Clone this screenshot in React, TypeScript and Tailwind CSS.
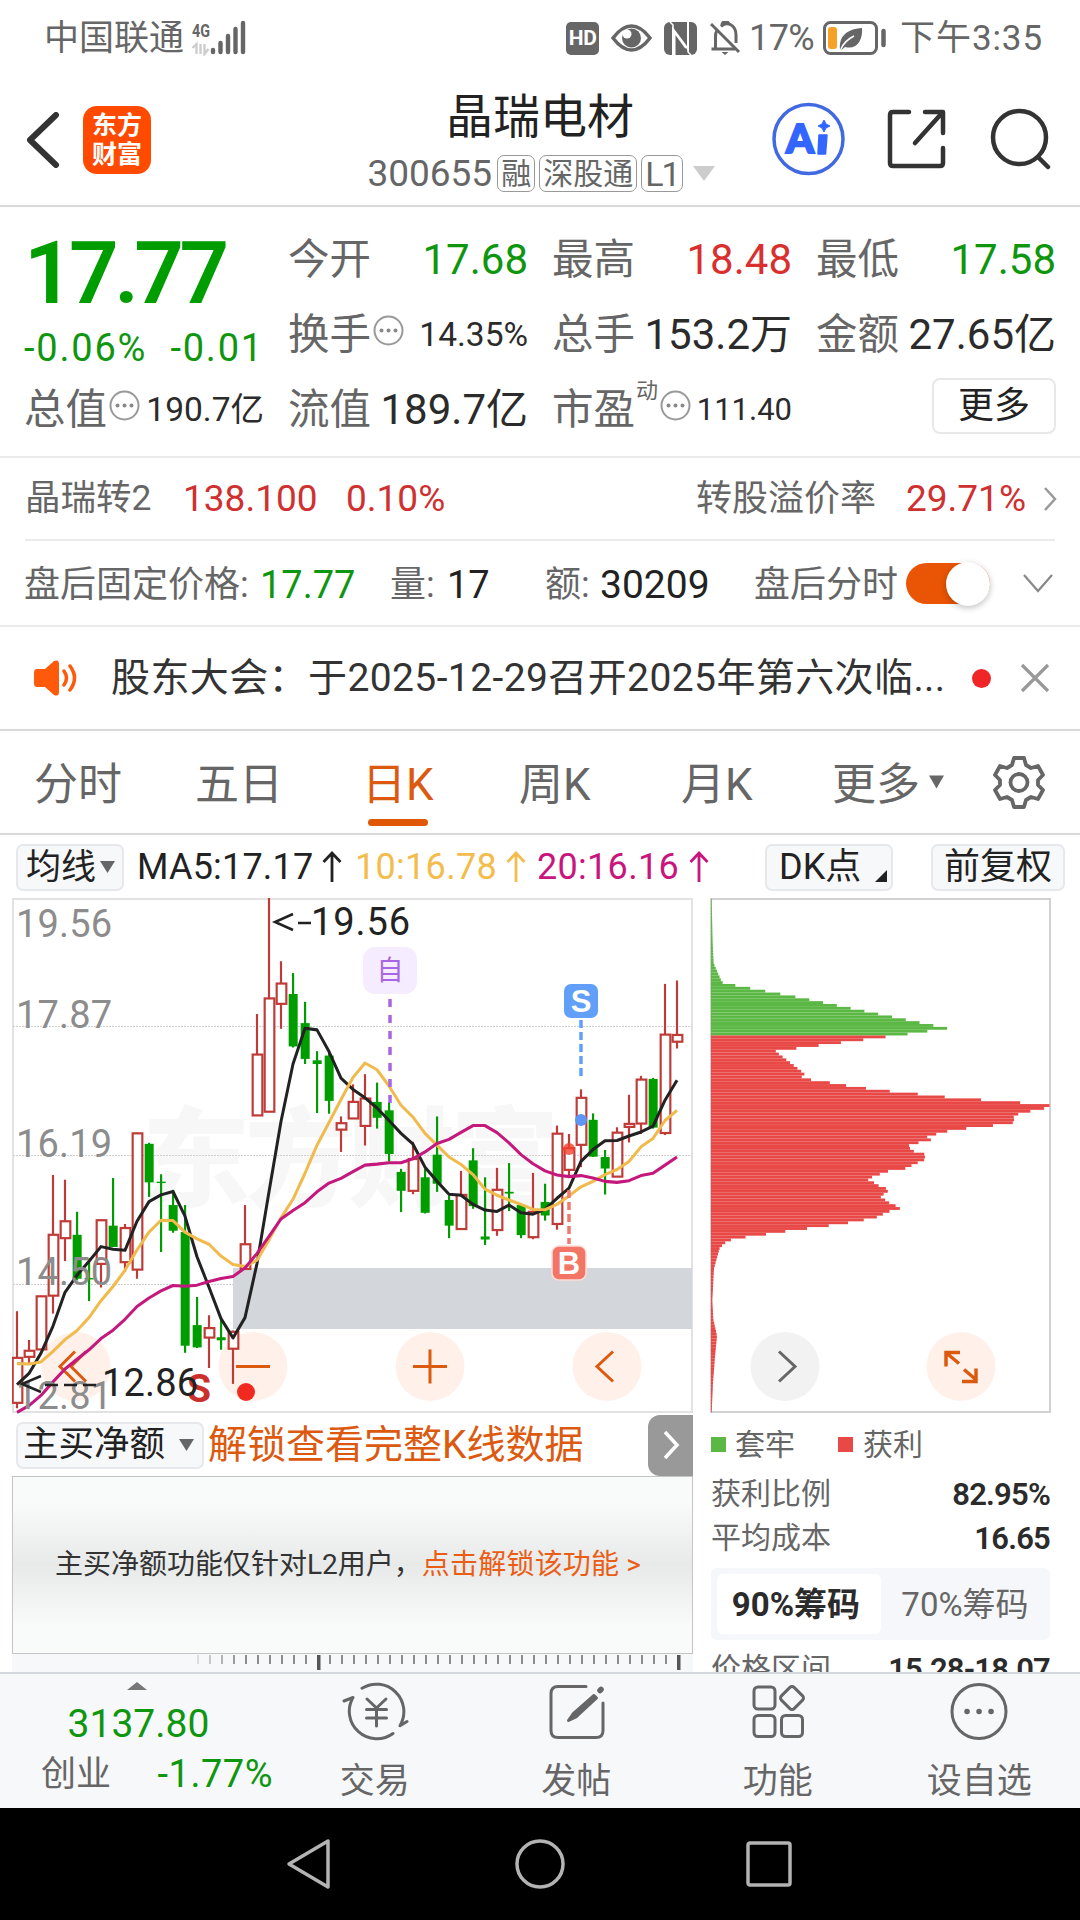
import React from "react";
import clsx from "clsx";

type Candle = [up: 0 | 1, high: number, top: number, bottom: number, low: number];

// plot units: one candle every 36, y grows downwards
const CANDLES: Candle[] = [
  [1, 1246, 1382, 1518, 1533], [1, 1331, 1361, 1382, 1402], [1, 1200, 1200, 1360, 1360], [1, 843, 1018, 1201, 1253],
  [1, 857, 978, 1031, 1098], [0, 952, 1020, 1150, 1155], [0, 1090, 1148, 1152, 1216], [1, 975, 975, 1107, 1176],
  [0, 852, 993, 1056, 1056], [1, 988, 998, 1102, 1130], [1, 718, 718, 1124, 1150], [0, 748, 751, 865, 908],
  [0, 841, 863, 867, 1071], [0, 887, 932, 1008, 1014], [0, 932, 1012, 1348, 1369], [0, 1204, 1287, 1353, 1355],
  [1, 1258, 1294, 1325, 1414], [0, 1270, 1323, 1332, 1360], [1, 1303, 1305, 1358, 1461], [1, 932, 1046, 1122, 1122],
  [1, 367, 485, 668, 668], [1, 24, 319, 657, 657], [1, 211, 275, 338, 411], [0, 246, 308, 463, 466],
  [0, 331, 394, 500, 515], [0, 477, 504, 515, 660], [0, 480, 490, 624, 662], [1, 670, 688, 710, 775],
  [1, 575, 625, 677, 677], [1, 545, 615, 699, 756], [0, 570, 627, 674, 706], [0, 628, 652, 781, 803],
  [0, 825, 834, 890, 953], [1, 745, 794, 891, 900], [0, 825, 850, 955, 957], [0, 670, 783, 869, 893],
  [0, 903, 917, 993, 1030], [1, 831, 900, 1004, 1004], [0, 764, 800, 935, 943], [0, 850, 1025, 1034, 1050],
  [1, 822, 885, 1007, 1023], [0, 808, 893, 898, 950], [0, 930, 932, 1021, 1030], [1, 837, 950, 1028, 1033],
  [0, 869, 923, 963, 978], [1, 697, 719, 989, 1005], [1, 722, 762, 829, 845], [1, 590, 613, 755, 820],
  [0, 661, 680, 789, 790], [0, 769, 790, 824, 901], [1, 702, 716, 849, 849], [1, 606, 690, 702, 747],
  [1, 550, 559, 692, 722], [0, 556, 559, 703, 706], [1, 278, 426, 720, 725], [1, 268, 427, 450, 469],
];

const MA5 = [
  1463, 1430, 1370, 1290, 1190, 1140, 1098, 1055, 1063, 1066, 980, 922, 902, 892, 965, 1085, 1175, 1268, 1325, 1265,
  1105, 893, 685, 515, 409, 414, 478, 557, 590, 615, 645, 682, 720, 752, 820, 862, 900, 903, 930, 947,
  951, 932, 955, 959, 945, 912, 882, 803, 768, 742, 741, 728, 716, 699, 622, 563,
];

const MA10 = [
  1401, 1402, 1396, 1365, 1330, 1303, 1265, 1215, 1173, 1125, 1065, 1012, 977, 978, 1012, 1032, 1048, 1083, 1108, 1114,
  1095, 1035, 970, 915, 838, 755, 688, 620, 555, 512, 532, 580, 637, 672, 720, 755, 790, 812, 842, 885,
  903, 917, 930, 945, 946, 930, 905, 878, 862, 842, 827, 803, 760, 735, 682, 652,
];

const MA20 = [
  1545, 1525, 1495, 1455, 1417, 1388, 1360, 1327, 1302, 1270, 1232, 1207, 1186, 1170, 1172, 1169, 1158, 1149, 1143, 1118,
  1075, 1025, 973, 948, 925, 893, 867, 853, 833, 814, 811, 807, 807, 795, 775, 750, 738, 717, 697, 697,
  718, 748, 783, 810, 831, 843, 848, 845, 852, 862, 865, 860, 845, 838, 814, 790,
];

// chip distribution outline: [y, right end of the bar]
const CHIPS: [number, number][] = [
  [182, 64], [300, 67], [355, 70], [405, 95], [413, 135], [421, 182], [444, 319], [527, 771], [543, 646], [580, 320],
  [588, 255], [648, 343], [656, 334], [663, 356], [670, 410], [678, 460], [686, 522], [693, 585], [700, 665], [708, 744],
  [716, 857], [723, 968], [731, 1080], [738, 1072], [746, 1029], [753, 989], [761, 972], [768, 969], [776, 981], [784, 924],
  [792, 837], [799, 778], [807, 745], [814, 706], [822, 729], [830, 690], [837, 656], [852, 662], [860, 702], [875, 706],
  [882, 689], [890, 666], [898, 657], [905, 600], [913, 574], [920, 552], [928, 529], [935, 549], [943, 558], [950, 583],
  [958, 596], [966, 585], [973, 568], [980, 580], [988, 593], [996, 605], [1003, 641], [1011, 607], [1018, 581], [1026, 573],
  [1034, 533], [1041, 494], [1049, 435], [1056, 378], [1064, 304], [1072, 246], [1079, 186], [1087, 128], [1095, 107],
  [1103, 98], [1108, 89], [1165, 71], [1250, 66], [1300, 69], [1345, 80], [1400, 74], [1470, 68], [1549, 64],
];

const cx = (i: number) => 51 + i * 36;
const toPoints = (line: number[]) => line.map((v, i) => `${cx(i)},${v}`).join(" ");

const chipEnd = (y: number) => {
  const i = CHIPS.findIndex(([py]) => py >= y);
  if (i <= 0) return CHIPS[0][1];
  const [y0, x0] = CHIPS[i - 1];
  const [y1, x1] = CHIPS[i];
  return x0 + ((x1 - x0) * (y - y0)) / (y1 - y0);
};

const StatusBar = () => (
  <div className="flex h-[75px] shrink-0 items-center pl-[44px] pr-[37px] pt-px text-[35px] leading-none text-[#666]">
    <span>中国联通</span>
    <svg className="ml-[7px]" width="56" height="36" viewBox="0 0 56 36">
      <text x="1" y="17" fontSize="19" fontWeight="700" fill="#666" textLength="18" lengthAdjust="spacingAndGlyphs">4G</text>
      <path d="M5.500 34V24L1.500 28M9.500 34V24M13.500 24v10l4-5" stroke="#ccc" strokeWidth="2.300" fill="none" />
      <g stroke="#666" strokeWidth="4.400" strokeLinecap="round">
        <path d="M22 32v-2M29.500 32V23M37 32V16M44.500 32V9M52 32V3" />
      </g>
    </svg>
    <div className="ml-auto flex items-center">
      <span className="flex h-[33px] w-[33px] items-center justify-center rounded-[5px] bg-[#666] text-[21px] font-bold tracking-[-0.5px] text-white">HD</span>
      <svg className="ml-[12px]" width="41" height="28" viewBox="0 0 41 28">
        <path d="M2 14Q11 2 20.500 2T39 14Q30 26 20.500 26T2 14z" fill="none" stroke="#666" strokeWidth="3.500" />
        <circle cx="20.500" cy="14" r="9.500" fill="#666" />
        <circle cx="16" cy="10" r="4.500" fill="#fff" />
      </svg>
      <svg className="ml-[12px]" width="33" height="33" viewBox="0 0 33 33">
        <rect width="33" height="33" rx="6" fill="#666" />
        <path d="M9 33V7l15 20V0M10.500 33V10l11.500 16" fill="none" stroke="#fff" strokeWidth="2" />
        <path d="M6 0l3 3v30M27 33l-3-3V0" fill="none" stroke="#fff" strokeWidth="1.500" />
      </svg>
      <svg className="ml-[13px]" width="31" height="34" viewBox="0 0 31 34" fill="none" stroke="#666" strokeWidth="3">
        <path d="M5.500 27V15c0-2 .5-4 1.500-5.500M11 5.500C17-.5 26 4 26 14v8M1.500 28H25" />
        <path d="M1 3l28 28" />
        <path d="M11.500 31h7l-3.500 3z" fill="#666" stroke="none" />
        <path d="M12 4a3 3 0 0 1 7 0" />
      </svg>
      <span className="ml-[8px] w-[68px] text-[36px] tracking-[-0.7px]">17%</span>
      <svg className="ml-[6px]" width="64" height="34" viewBox="0 0 64 34">
        <rect x="1.500" y="1.500" width="52" height="31" rx="6" fill="none" stroke="#666" strokeWidth="3" />
        <rect x="5" y="6" width="9" height="22" rx="3" fill="#f7a128" />
        <path d="M17 28c-1-12 6-20 22-21 1 12-5 22-17 19l-3 2.500z" fill="#666" />
        <path d="M18 28c3-7 7-10 13-13" stroke="#fff" strokeWidth="1.500" fill="none" />
        <path d="M60.500 10v14" stroke="#666" strokeWidth="4.500" strokeLinecap="round" />
      </svg>
      <span className="ml-[13px] tracking-[0.9px]">下午3:35</span>
    </div>
  </div>
);

const Tag = ({ children }: { children: React.ReactNode }) => (
  <span className="flex h-[37px] shrink-0 items-center whitespace-nowrap rounded-[7px] border border-[#999] px-[3px] text-[30px] leading-none">{children}</span>
);

const Header = () => (
  <header className="flex h-[132px] shrink-0 border-b-2 border-[#d9d9d9]">
    <div className="flex w-[360px] items-center pb-px pl-[26px]">
      <svg width="34" height="56" viewBox="0 0 34 56">
        <path d="M30 3L4 28l26 25" fill="none" stroke="#333" strokeWidth="6" strokeLinecap="round" strokeLinejoin="round" />
      </svg>
      <div className="ml-[23px] flex h-[68px] w-[68px] flex-col items-center justify-center rounded-[14px] bg-[#ff4a00] text-[25px] font-bold leading-[29px] text-white">
        <span>东方</span>
        <span>财富</span>
      </div>
    </div>
    <div className="flex w-[360px] flex-col items-center">
      <h1 className="mt-[18px] text-[47px] leading-[48px] text-[#222]">晶瑞电材</h1>
      <div className="mt-[14px] flex items-center gap-[4px] whitespace-nowrap pl-[2px] text-[#666]">
        <span className="mr-px text-[37px] leading-none">300655</span>
        <Tag>融</Tag>
        <Tag>深股通</Tag>
        <Tag><span className="text-[34px] tracking-[-2px]">L1</span></Tag>
        <svg className="ml-[6px]" width="22" height="15" viewBox="0 0 22 15"><path d="M0 0h22L11 15z" fill="#ccc" /></svg>
      </div>
    </div>
    <div className="flex flex-1 items-center pb-[2px] pl-[52px]">
      <svg width="73" height="74" viewBox="0 0 73 74">
        <circle cx="36.500" cy="37" r="34.500" fill="none" stroke="#4169e1" strokeWidth="3.500" />
        <text x="14" y="51" fontSize="40" fontWeight="900" fill="#3366ff" stroke="#3366ff" strokeWidth="2" fontFamily="Lato" textLength="28" lengthAdjust="spacingAndGlyphs">A</text>
        <path d="M47 33h8l-1.500 19H46z" fill="#3366ff" stroke="#3366ff" strokeWidth="1.500" strokeLinejoin="round" />
        <path d="M52 18l2 4 4 2-4 2-2 4-2-4-4-2 4-2z" fill="#3366ff" stroke="#3366ff" />
      </svg>
      <svg className="ml-[42px]" width="60" height="60" viewBox="0 0 60 60" fill="none" stroke="#333" strokeWidth="4.500" strokeLinecap="round" strokeLinejoin="round">
        <path d="M22 3H6Q3 3 3 6v48q0 3 3 3h47q3 0 3-3V39" />
        <path d="M38 3h18v21M55 4L28 34" />
      </svg>
      <svg className="ml-[43px]" width="62" height="62" viewBox="0 0 62 62" fill="none" stroke="#333" strokeWidth="4.500" strokeLinecap="round">
        <circle cx="29.500" cy="29.500" r="26.500" />
        <path d="M48 49l10 10" />
      </svg>
    </div>
  </header>
);

const InfoDots = () => (
  <svg className="mb-[8px] ml-[2px] shrink-0" width="31" height="31" viewBox="0 0 31 31">
    <circle cx="15.500" cy="15.500" r="14" fill="none" stroke="#999" strokeWidth="2" />
    <g fill="#888">
      <circle cx="8.500" cy="15.500" r="2" />
      <circle cx="15.500" cy="15.500" r="2" />
      <circle cx="22.500" cy="15.500" r="2" />
    </g>
  </svg>
);

interface StatProps {
  label: string;
  value: string;
  tone?: string;
  dots?: boolean;
  sup?: string;
}

const Stat = ({ label, value, tone = "text-[#2b2b2b]", dots, sup }: StatProps) => (
  <div className="flex h-[75px] items-center whitespace-nowrap">
    <span className="text-[41.5px] text-[#666]">{label}</span>
    {sup && <span className="mb-[38px] ml-px text-[22px] text-[#666]">{sup}</span>}
    {dots && <InfoDots />}
    <span className={clsx("ml-auto", sup ? "text-[31px]" : dots ? "text-[33.5px]" : "text-[42px]", tone)}>{value}</span>
  </div>
);

const Quote = () => (
  <section className="grid h-[251px] shrink-0 grid-cols-[240px_240px_240px_240px] gap-x-[24px] border-b-2 border-[#ebebeb] pl-[24px] pt-[15px] leading-none">
    <div>
      <div className="h-[101px] pt-[8px] text-[87px] font-semibold tracking-[-4.6px] text-[#009d00]">17.77</div>
      <div className="flex h-[49px] items-center justify-between text-[38px] text-[#0f960f]">
        <span className="tracking-[1.8px]">-0.06%</span>
        <span className="tracking-[1.8px]">-0.01</span>
      </div>
      <Stat label="总值" value="190.7亿" dots />
    </div>
    <div>
      <Stat label="今开" value="17.68" tone="text-[#0f960f]" />
      <Stat label="换手" value="14.35%" dots />
      <Stat label="流值" value="189.7亿" />
    </div>
    <div>
      <Stat label="最高" value="18.48" tone="text-[#d9302f]" />
      <Stat label="总手" value="153.2万" />
      <Stat label="市盈" sup="动" value="111.40" dots />
    </div>
    <div>
      <Stat label="最低" value="17.58" tone="text-[#0f960f]" />
      <Stat label="金额" value="27.65亿" />
      <button className="ml-auto mt-[6px] flex h-[56px] w-[124px] items-center justify-center rounded-[8px] border-2 border-[#e8e8e8] text-[36px] text-[#222]">更多</button>
    </div>
  </section>
);

const BondRow = () => (
  <section className="mx-[25px] flex h-[83px] shrink-0 items-center whitespace-nowrap border-b-2 border-[#ebebeb] text-[35.5px] leading-none text-[#666]">
    <span className="w-[158px]">晶瑞转2</span>
    <span className="w-[163px] text-[37px] text-[#cf3030]">138.100</span>
    <span className="text-[37px] text-[#cf3030]">0.10%</span>
    <span className="ml-auto text-[36px]">转股溢价率</span>
    <span className="ml-[30px] text-[37px] text-[#cf3030]">29.71%</span>
    <svg className="ml-[17px] mr-[-2px]" width="14" height="26" viewBox="0 0 14 26"><path d="M2 2l10 11L2 24" fill="none" stroke="#999" strokeWidth="2.500" /></svg>
  </section>
);

const AfterHours = () => (
  <section className="flex h-[86px] shrink-0 items-center whitespace-nowrap border-b-2 border-[#ebebeb] pl-[24px] pt-[4px] text-[36px] leading-none text-[#666]">
    <span className="w-[236px]">盘后固定价格:</span>
    <span className="w-[130px] text-[38px] text-[#0f960f]">17.77</span>
    <span className="w-[57px]">量:</span>
    <span className="w-[98px] text-[38px] text-[#222]">17</span>
    <span className="w-[55px]">额:</span>
    <span className="w-[154px] text-[39px] text-[#222]">30209</span>
    <span className="w-[152px]">盘后分时</span>
    <span className="mb-[3px] flex h-[41px] w-[84px] items-center justify-end rounded-full bg-[#e95504]">
      <span className="h-[44px] w-[44px] rounded-full bg-white shadow-[0_2px_6px_rgba(0,0,0,0.25)]" />
    </span>
    <svg className="mb-[3px] ml-[33px]" width="30" height="20" viewBox="0 0 30 20"><path d="M1 1l14 16L29 1" fill="none" stroke="#888" strokeWidth="2.200" /></svg>
  </section>
);

const News = () => (
  <section className="flex h-[104px] shrink-0 items-center whitespace-nowrap border-b-2 border-[#d9d9d9] pl-[34px] text-[39px] leading-none text-[#333]">
    <svg width="44" height="36" viewBox="0 0 44 36">
      <path d="M3 9h8L20 1q5-2 5 3v28q0 5-5 3l-9-8H3q-3 0-3-4V13q0-4 3-4z" fill="#ff5a0a" />
      <path d="M30 11q5 7 0 14M36 6q9 12 0 24" fill="none" stroke="#ff5a0a" strokeWidth="3.500" strokeLinecap="round" />
    </svg>
    <span className="ml-[33px] w-[861px] tracking-[0.4px]">股东大会：于2025-12-29召开2025年第六次临...</span>
    <span className="h-[19px] w-[19px] rounded-full bg-[#f02626]" />
    <svg className="ml-[29px]" width="30" height="30" viewBox="0 0 30 30"><path d="M2 2l26 26M28 2L2 28" stroke="#999" strokeWidth="3.200" /></svg>
  </section>
);

const Tabs = () => (
  <nav className="flex h-[104px] shrink-0 items-start whitespace-nowrap border-b-2 border-[#d9d9d9] pl-[34px] pt-[32px] text-[44px] leading-none text-[#666]">
    <span className="w-[161px]">分时</span>
    <span className="w-[167px]">五日</span>
    <span className="flex w-[157px] flex-col text-[#dc5a10]">
      日K
      <span className="ml-[6px] mt-[12px] h-[7px] w-[60px] rounded-full bg-[#e05806]" />
    </span>
    <span className="w-[162px]">周K</span>
    <span className="w-[151px]">月K</span>
    <span className="w-[97px]">更多</span>
    <svg className="mt-[12px]" width="15" height="14" viewBox="0 0 16 14"><path d="M0 0h16L8 14z" fill="#666" /></svg>
    <svg className="ml-[48px] mt-[-8px]" width="54" height="54" viewBox="0 0 54 54" fill="none" stroke="#666" strokeWidth="3.800">
      <path d="M22 3h10l2 7 5 3 7-2 5 9-5 5v5l5 5-5 9-7-2-5 3-2 7H22l-2-7-5-3-7 2-5-9 5-5v-5l-5-5 5-9 7 2 5-3z" strokeLinejoin="round" />
      <circle cx="27" cy="27.500" r="8.500" />
    </svg>
  </nav>
);

const PillButton = ({ className, children }: { className?: string; children: React.ReactNode }) => (
  <button className={clsx("flex h-[47px] shrink-0 items-center rounded-[7px] border-2 border-[#e6e8eb] bg-[#f7f8fa] text-[#222]", className)}>{children}</button>
);

const Caret = ({ className }: { className?: string }) => (
  <svg className={className} width="15" height="12" viewBox="0 0 15 12"><path d="M0 0h15L7.500 12z" fill="#666" /></svg>
);

const UpArrow = ({ className }: { className?: string }) => (
  <svg className={clsx("shrink-0", className)} width="20" height="32" viewBox="0 0 20 32" fill="none" stroke="currentColor" strokeWidth="2.800"><path d="M10 31V2M1.500 11L10 2l8.500 9" /></svg>
);

const MaRow = () => (
  <div className="flex h-[63px] shrink-0 items-center whitespace-nowrap pl-[16px] pt-px text-[36px] leading-none">
    <PillButton className="w-[108px] pl-[8px] text-[35px]">均线<Caret className="ml-[4px]" /></PillButton>
    <span className="ml-[13px] w-[185px] tracking-[0.2px] text-[#222]">MA5:17.17</span>
    <UpArrow className="text-[#222]" />
    <span className="ml-[13px] w-[151px] tracking-[0.3px] text-[#f3bd4d]">10:16.78</span>
    <UpArrow className="text-[#f3bd4d]" />
    <span className="ml-[11px] w-[152px] tracking-[0.3px] text-[#c9157e]">20:16.16</span>
    <UpArrow className="text-[#c9157e]" />
    <PillButton className="ml-[56px] w-[128px] justify-between pl-[12px] pr-[4px] text-[36px]">
      DK点
      <svg className="mt-[18px]" width="12" height="12"><path d="M12 0v12H0z" fill="#222" /></svg>
    </PillButton>
    <PillButton className="ml-[38px] w-[134px] justify-center text-[36px]">前复权</PillButton>
  </div>
);

const RoundButton = ({ x, gray, d }: { x: number; gray?: boolean; d: string }) => (
  <g transform={`translate(${x} 468.500)`}>
    <circle r="34.500" fill={gray ? "#f2f2f2" : "#fff1e9"} />
    <path d={d} fill="none" stroke={gray ? "#666" : "#dc5a10"} strokeWidth="3" />
  </g>
);

const KLine = () => (
  <svg width="682" height="516" viewBox="0 0 682 516">
    <rect x="1" y="1" width="679" height="513" fill="#fff" stroke="#e2e2e2" strokeWidth="2" />
    <g fill="#f7f7f7" fontFamily="Noto Sans CJK SC" fontWeight="900" fontSize="108">
      <text x="130" y="300" letterSpacing="-5">东方财富</text>
    </g>
    <g stroke="#d0d0d0" strokeWidth="1" strokeDasharray="2 1">
      <path d="M1 128.500h679M1 257.500h679M1 386.500h679" />
    </g>
    <rect x="221" y="370" width="459" height="61" fill="#d3d7dc" />
    <g fill="#8c8c8c" fontSize="38">
      <text x="4" y="39" textLength="96">19.56</text>
      <text x="4" y="130" textLength="96">17.87</text>
      <text x="4" y="259" textLength="96">16.19</text>
    </g>
    <RoundButton x={64} d="M-1-15L-16 0l15 15M10-15L-5 0l15 15" />
    <RoundButton x={241} d="M-17 0h34" />
    <RoundButton x={418} d="M-17 0h34M0-17v34" />
    <RoundButton x={595} d="M6-15L-10 0L6 15" />
    <svg x="0" y="0" width="682" height="516" viewBox="36 24 2046 1526" preserveAspectRatio="none">
      {CANDLES.map(([up, high, top, bottom, low], i) =>
        up ? (
          <g key={i} stroke="#bf3b38" strokeWidth="6.500" fill="#fff">
            <path d={`M${cx(i)} ${high}V${low}`} />
            <rect x={cx(i) - 13} y={top + 2} width="29" height={Math.max(bottom - top - 3, 4)} />
          </g>
        ) : (
          <g key={i} fill="#009d00">
            <rect x={cx(i) - 3} y={high} width="6.500" height={low - high} />
            <rect x={cx(i) - 13} y={top} width="27" height={bottom - top} />
          </g>
        )
      )}
      <g fill="none" strokeWidth="9" strokeLinejoin="round">
        <polyline points={toPoints(MA5)} stroke="#222" />
        <polyline points={toPoints(MA10)} stroke="#f0ba4c" />
        <polyline points={toPoints(MA20)} stroke="#c4187c" />
      </g>
    </svg>
    <g fill="#8c8c8c" fontSize="38">
      <text x="4" y="387" textLength="96">14.50</text>
      <text x="4" y="511" textLength="96">12.81</text>
    </g>
    <text x="175" y="504" fontSize="39" fontWeight="700" fill="#c9302e">S</text>
    <circle cx="234" cy="494" r="9" fill="#f02a20" />
    <g fill="#222" fontSize="38">
      <text x="90" y="498" textLength="96">12.86</text>
      <text x="299" y="37" textLength="99">19.56</text>
    </g>
    <g fill="none" stroke="#222" strokeWidth="2.500">
      <path d="M29 478L10 486l19 8M33 487h13M52 487h13M71 487h13M281 16l-18 8 18 8M286 25h13" />
    </g>
    <g>
      <rect x="351" y="49" width="54" height="47" rx="12" fill="#f5edff" />
      <text x="378" y="82" fontSize="27" textAnchor="middle" fill="#a866e6">自</text>
      <path d="M378 101v104" stroke="#a866e6" strokeWidth="3.500" strokeDasharray="8 8" />
      <rect x="552" y="86" width="34" height="34" rx="7" fill="#629ff8" />
      <text x="569" y="114" fontSize="31" fontWeight="700" textAnchor="middle" fill="#fff" fontFamily="Liberation Sans">S</text>
      <path d="M569 122v56" stroke="#629ff8" strokeWidth="3.500" strokeDasharray="8 4" />
      <circle cx="569" cy="222" r="6" fill="#5e96f5" />
      <circle cx="557" cy="251" r="6" fill="#f4402c" opacity="0.8" />
      <path d="M557 292v54" stroke="#ee7a6b" strokeWidth="3.500" strokeDasharray="8 4" />
      <rect x="540" y="348" width="34" height="34" rx="7" fill="#f27565" stroke="#fbdcd6" strokeWidth="1.500" />
      <text x="557" y="376" fontSize="31" fontWeight="700" textAnchor="middle" fill="#fff" fontFamily="Liberation Sans">B</text>
    </g>
  </svg>
);

const ChipChart = () => (
  <svg width="341" height="516" viewBox="0 0 341 516">
    <rect x="1" y="1" width="339" height="513" fill="#fff" stroke="#ccc" strokeWidth="1.800" />
    <svg x="1" y="0.500" width="339" height="514" viewBox="62 182 1018 1366" preserveAspectRatio="none">
      {Array.from({ length: 180 }, (_, i) => 185 + i * 7.6).map((y) => (
        <rect key={y} x="62" y={y - 3.8} width={chipEnd(y) - 62} height="7.600" fill={y < 547 ? "#5cb845" : "#e84846"} />
      ))}
    </svg>
    <RoundButton x={75} gray d="M-6-15L10 0L-6 15" />
    <g transform="translate(251 468.500)">
      <circle r="34.500" fill="#fff1e9" />
      <path d="M-15 0v-14h14M-14-13L-2-3M3 3l13 11M1 15h14V2" fill="none" stroke="#dc5a10" strokeWidth="3.500" />
    </g>
  </svg>
);

const MainBuy = () => (
  <div className="w-[681px]">
    <div className="flex h-[62px] items-center whitespace-nowrap pl-[4px] leading-none">
      <PillButton className="w-[188px] justify-between pl-[5px] pr-[8px] text-[35.5px]">主买净额<Caret /></PillButton>
      <span className="ml-[4px] text-[39px] text-[#dc5a10]">解锁查看完整K线数据</span>
      <span className="ml-auto flex h-[61px] w-[45px] items-center justify-center rounded-l-[12px] bg-[#999]">
        <svg width="18" height="30" viewBox="0 0 18 30"><path d="M3 2l12 13L3 28" fill="none" stroke="#fff" strokeWidth="3.500" /></svg>
      </span>
    </div>
    <div className="flex h-[178px] items-center whitespace-nowrap border border-[#c4c4c4] bg-linear-to-b from-[#f9fafa] from-15% via-[#e8e9e9] to-[#f9fafa] to-85% pl-[42px] text-[28px] leading-none text-[#333]">
      主买净额功能仅针对L2用户，<span className="tracking-[0.2px] text-[#ea5d16]">点击解锁该功能 &gt;</span>
    </div>
    <svg className="bg-[#f7f8fa]" width="681" height="19" viewBox="0 0 681 19">
      {Array.from({ length: 41 }, (_, i) => {
        const major = i === 10 || i === 40;
        return (
          <rect
            key={i}
            x={185 + i * 12}
            y="1"
            width={major ? 3.5 : 2}
            height={major ? 15 : 9}
            fill={major ? "#555" : "#8c8c8c"}
            opacity={i < 4 ? 0.25 + i * 0.2 : 1}
          />
        );
      })}
    </svg>
  </div>
);

const ChipRow = ({ label, value }: { label: string; value: string }) => (
  <div className="flex h-[44px] items-center justify-between whitespace-nowrap">
    <span className="text-[30px] text-[#666]">{label}</span>
    <span className="text-[31px] font-semibold tracking-[-0.8px] text-[#2b2b2b]">{value}</span>
  </div>
);

const ChipInfo = () => (
  <div className="h-[258px] w-[340px] overflow-hidden pl-px leading-none">
    <div className="flex h-[58px] items-center whitespace-nowrap pt-[3px] text-[30px] text-[#666]">
      <span className="mr-[9px] h-[15px] w-[15px] bg-[#5cb845]" />
      套牢
      <span className="ml-[43px] mr-[10px] h-[15px] w-[15px] bg-[#e84846]" />
      获利
    </div>
    <ChipRow label="获利比例" value="82.95%" />
    <ChipRow label="平均成本" value="16.65" />
    <div className="mb-[7px] mt-[8px] flex h-[72px] items-center rounded-[6px] bg-[#f6f7fa] p-[6px] text-[33px]">
      <span className="flex h-[60px] w-[164px] items-center justify-center whitespace-nowrap rounded-[6px] bg-white pr-[6px] font-bold text-[#2b2b2b]">90%筹码</span>
      <span className="flex flex-1 items-center justify-center whitespace-nowrap pl-[5px] text-[#666]">70%筹码</span>
    </div>
    <ChipRow label="价格区间" value="15.28-18.07" />
  </div>
);

const NavItem = ({ label, children }: { label: string; children: React.ReactNode }) => (
  <div className="flex w-[201.5px] flex-col items-center pt-[8px]">
    <svg width="68" height="60" viewBox="-2 -1 68 60" fill="none" stroke="#666" strokeWidth="3" strokeLinecap="round" strokeLinejoin="round">
      {children}
    </svg>
    <span className="mt-[22px] text-[35px]">{label}</span>
  </div>
);

const BottomNav = () => (
  <nav className="flex h-[136px] shrink-0 border-t-2 border-[#d5d8dc] bg-[#f7f8fa] leading-none text-[#666]">
    <div className="flex w-[274px] flex-col items-center whitespace-nowrap text-[39px] text-[#0f960f]">
      <svg className="mt-[8px]" width="20" height="8" viewBox="0 0 20 8"><path d="M0 8L10 0l10 8z" fill="#777" /></svg>
      <span className="ml-[3px] mt-[15px]">3137.80</span>
      <div className="mt-[11px] flex w-full items-center justify-between pl-[41px] pr-px text-[38px]">
        <span className="text-[35px] text-[#666]">创业</span>
        <span className="tracking-[0.5px]">-1.77%</span>
      </div>
    </div>
    <NavItem label="交易">
      <path d="M19 5.200A27.500 27.500 0 0 1 57 42.700L64 38.500M50 50.500A27.500 27.500 0 0 1 10 14.500L1 18" />
      <path d="M24 16l9.500 9 9.500-9M33.500 25v18M23.500 26.500h20M23.500 35h20" />
    </NavItem>
    <NavItem label="发帖">
      <path d="M42 3.500H14q-7 0-7 7v37q0 7 7 7h38q7 0 7-7V20" />
      <path d="M50 12.500L29 31l-4.500 6.500L32 34 52.500 15z" fill="#666" />
      <path d="M56 7.500l1-1" strokeWidth="5.500" />
    </NavItem>
    <NavItem label="功能">
      <rect x="8" y="4" width="21" height="22" rx="4" />
      <rect x="8" y="32.500" width="21" height="21" rx="4" />
      <rect x="35.500" y="32.500" width="21" height="21" rx="4" />
      <rect x="37" y="6" width="18" height="18" rx="3" transform="rotate(45 46 15)" />
    </NavItem>
    <NavItem label="设自选">
      <circle cx="32" cy="28.500" r="27" />
      <path d="M20 28.500h.1M32 28.500h.1M44 28.500h.1" strokeWidth="5.500" />
    </NavItem>
  </nav>
);

const SystemNav = () => (
  <div className="flex h-[112px] shrink-0 items-center bg-black pl-[286px]">
    <svg width="46" height="52" viewBox="0 0 46 52"><path d="M42 3v46L3 26z" fill="none" stroke="#b3b3b3" strokeWidth="3.500" strokeLinejoin="round" /></svg>
    <svg className="ml-[183px]" width="50" height="50" viewBox="0 0 50 50"><circle cx="25" cy="25" r="23" fill="none" stroke="#b3b3b3" strokeWidth="3.500" /></svg>
    <svg className="ml-[181px]" width="46" height="46" viewBox="0 0 46 46"><rect x="2" y="2" width="42" height="42" rx="2" fill="none" stroke="#b3b3b3" strokeWidth="3.500" /></svg>
  </div>
);

const App = () => {
  return (
    <div className="flex h-[1920px] w-[1080px] flex-col overflow-hidden bg-white font-['Roboto','Noto_Sans_CJK_SC',sans-serif]">
      <StatusBar />
      <Header />
      <Quote />
      <BondRow />
      <AfterHours />
      <News />
      <Tabs />
      <MaRow />
      <main className="grid h-[774px] shrink-0 grid-cols-[682px_341px] content-start gap-x-[16px] overflow-hidden pl-[12px]">
        <KLine />
        <ChipChart />
        <MainBuy />
        <ChipInfo />
      </main>
      <BottomNav />
      <SystemNav />
    </div>
  );
};

export default App;
